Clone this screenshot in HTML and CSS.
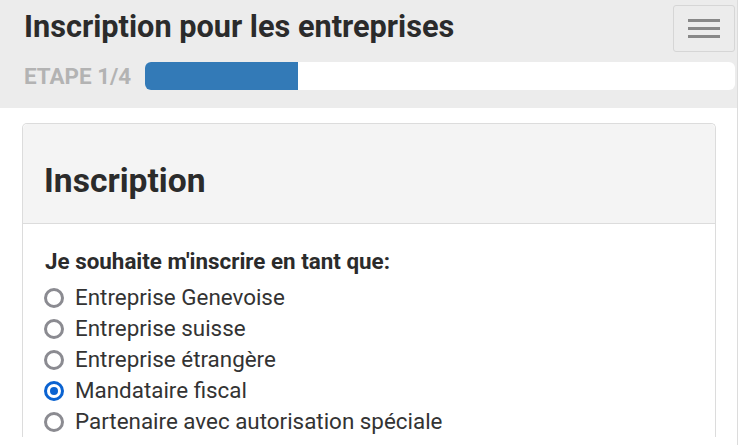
FILE: index.html
```html
<!DOCTYPE html>
<html lang="fr">
<head>
<meta charset="utf-8">
<title>Inscription</title>
<link rel="stylesheet" href="styles.css">
</head>
<body>
<div class="page">
  <header class="top">
    <div class="top-row">
      <h1 class="title">Inscription pour les entreprises</h1>
      <button class="burger" type="button" aria-label="Menu">
        <span></span><span></span><span></span>
      </button>
    </div>
    <div class="step-row">
      <span class="step">ETAPE 1/4</span>
      <div class="progress"><div class="progress-fill" style="width:26%"></div></div>
    </div>
  </header>
  <main class="content">
    <section class="card">
      <div class="card-head"><h2>Inscription</h2></div>
      <div class="card-body">
        <p class="question">Je souhaite m'inscrire en tant que:</p>
        <ul class="options">
          <li><span class="radio"></span>Entreprise Genevoise</li>
          <li><span class="radio"></span>Entreprise suisse</li>
          <li><span class="radio"></span>Entreprise étrangère</li>
          <li><span class="radio checked"></span>Mandataire fiscal</li>
          <li><span class="radio"></span>Partenaire avec autorisation spéciale</li>
        </ul>
      </div>
    </section>
  </main>
</div>
</body>
</html>
```
FILE: styles.css
```css
* { box-sizing: border-box; }
html, body { margin: 0; padding: 0; background: #fff; }
body { font-family: Roboto, "Liberation Sans", sans-serif; color: #333; }
.page {
  width: 738px;
  min-height: 445px;
  border-right: 1px solid #dcdcdc;
}
.top {
  background: #ececec;
  padding: 5px 2px 0 24px;
  height: 108px;
}
.top-row {
  display: flex;
  justify-content: space-between;
  align-items: flex-start;
}
.title {
  margin: 4px 0 0;
  font-size: 30.7px;
  font-weight: 700;
  line-height: 36px;
  color: #2b2b2b;
}
.burger {
  width: 62px;
  height: 47px;
  border: 1px solid #d6d6d6;
  border-radius: 3px;
  background: #ececec;
  display: flex;
  flex-direction: column;
  align-items: center;
  justify-content: center;
  gap: 5px;
  padding: 0;
}
.burger span {
  display: block;
  width: 32px;
  height: 3px;
  background: #888;
}
.step-row {
  display: flex;
  align-items: center;
  margin-top: 10px;
  gap: 15px;
}
.step {
  font-size: 22.4px;
  font-weight: 700;
  color: #b3b3b3;
  width: 106px;
  white-space: nowrap;
}
.progress {
  flex: 1;
  height: 28px;
  background: #fff;
  border-radius: 6px;
  overflow: hidden;
}
.progress-fill {
  height: 100%;
  background: #337ab7;
}
.content {
  padding: 15px 21px 0 22px;
}
.card {
  border: 1px solid #dcdcdc;
  border-bottom: none;
  border-radius: 5px 5px 0 0;
}
.card-head {
  background: #f4f4f4;
  border-bottom: 1px solid #dcdcdc;
  border-radius: 5px 5px 0 0;
  height: 100px;
  padding: 0 21px;
  display: flex;
  align-items: center;
}
.card-head h2 {
  margin: 14px 0 0;
  font-size: 33.6px;
  font-weight: 700;
  color: #2b2b2b;
}
.card-body {
  padding: 22px 22px 0;
}
.question {
  margin: 0 0 6px;
  font-size: 22.4px;
  font-weight: 700;
  line-height: 30px;
  color: #2b2b2b;
}
.options {
  list-style: none;
  margin: 0;
  padding: 0;
}
.options li {
  display: flex;
  align-items: center;
  font-size: 22.4px;
  line-height: 31px;
  color: #333;
}
.radio {
  width: 20px;
  height: 20px;
  border: 3px solid #8b8b91;
  border-radius: 50%;
  margin-right: 11px;
  margin-left: -1px;
  flex: none;
  position: relative;
}
.radio.checked {
  border-color: #0b63d1;
}
.radio.checked::after {
  content: "";
  position: absolute;
  left: 50%;
  top: 50%;
  width: 8px;
  height: 8px;
  margin: -4px 0 0 -4px;
  border-radius: 50%;
  background: #0b63d1;
}
```
